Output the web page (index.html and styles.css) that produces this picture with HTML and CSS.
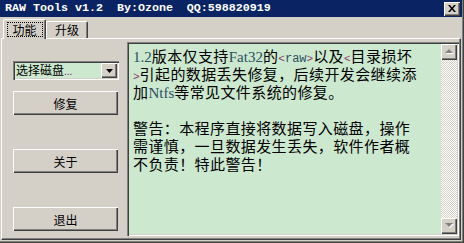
FILE: index.html
```html
<!DOCTYPE html>
<html>
<head>
<meta charset="utf-8">
<link rel="stylesheet" href="styles.css">
</head>
<body>
<div class="window">
  <div class="titlebar">
    <span class="title">RAW Tools v1.2  By:Ozone  QQ:598820919</span>
    <span class="close"><svg width="8" height="7" viewBox="0 0 8 7"><path d="M0 0h2l2 2.5L6 0h2L5 3.5 8 7H6L4 4.5 2 7H0l3-3.5z" fill="#000"/></svg></span>
  </div>
  <div class="tabs">
    <div class="tab active"><span class="focus">功能</span></div>
    <div class="tab">升级</div>
  </div>
  <div class="panel">
    <div class="side">
      <div class="combo">
        <span class="combo-text">选择磁盘<span class="dots">...</span></span>
        <span class="combo-btn"><svg width="7" height="4" viewBox="0 0 7 4"><path d="M0 0h7L3.5 4z" fill="#000"/></svg></span>
      </div>
      <div class="btn btn-first">修复</div>
      <div class="btn btn-gap">关于</div>
      <div class="btn btn-gap">退出</div>
    </div>
    <div class="memo">
      <div class="memo-text">
        <div class="line"><span class="lat">1.2</span>版本仅支持<span class="lat">Fat32</span>的<span class="tag">&lt;</span><span class="tw">raw</span><span class="tag">&gt;</span>以及<span class="tag">&lt;</span>目录损坏</div>
        <div class="line"><span class="tag">&gt;</span>引起的数据丢失修复，后续开发会继续添</div>
        <div class="line">加<span class="lat">Ntfs</span>等常见文件系统的修复。</div>
        <div class="line"></div>
        <div class="line">警告：本程序直接将数据写入磁盘，操作</div>
        <div class="line">需谨慎，一旦数据发生丢失，软件作者概</div>
        <div class="line">不负责！特此警告！</div>
      </div>
      <div class="scrollbar">
        <span class="sbtn"><svg width="9" height="6" viewBox="0 0 9 6"><path d="M1 5h8L5 1z" fill="#fff"/><path d="M0 4h8L4 0z" fill="#808080"/></svg></span>
        <span class="track"></span>
        <span class="sbtn"><svg width="9" height="6" viewBox="0 0 9 6"><path d="M1 1h8L5 5z" fill="#fff"/><path d="M0 0h8L4 4z" fill="#808080"/></svg></span>
      </div>
    </div>
  </div>
</div>
</body>
</html>
```
FILE: styles.css
```css
* { box-sizing: border-box; }
html, body { margin: 0; padding: 0; }
body {
  width: 464px;
  height: 243px;
  overflow: hidden;
  background: #d4d0c8;
  font-family: "Noto Sans CJK SC", "Liberation Sans", sans-serif;
}
.window {
  width: 464px;
  height: 243px;
  display: flex;
  flex-direction: column;
  background: #d4d0c8;
  padding: 0 2px 2px 0;
  box-shadow: inset -1px -1px #404040, inset -2px -2px #808080;
}
.titlebar {
  height: 17px;
  flex: none;
  background: #0a2463;
  display: flex;
  align-items: center;
  justify-content: space-between;
  padding: 0 2px 0 5px;
}
.title {
  color: #fff;
  font-family: "Liberation Mono", monospace;
  font-weight: bold;
  font-size: 11.67px;
  white-space: pre;
  line-height: 17px;
}
.close {
  width: 16px;
  height: 14px;
  background: #d4d0c8;
  display: flex;
  align-items: center;
  justify-content: center;
  box-shadow: inset 1px 1px #fff, inset -1px -1px #404040, inset -2px -2px #808080;
}
.close svg { display: block; }
.tabs {
  margin-top: 2px;
  height: 19px;
  flex: none;
  display: flex;
  align-items: flex-end;
  padding-left: 3px;
  position: relative;
  z-index: 1;
}
.tab {
  height: 17px;
  width: 42px;
  font-size: 12px;
  line-height: 14px;
  color: #000;
  border-top: 1px solid #fff;
  border-left: 1px solid #fff;
  border-right: 1px solid #404040;
  border-top-left-radius: 2px;
  border-top-right-radius: 2px;
  box-shadow: inset -1px 0 #808080;
  display: flex;
  align-items: center;
  justify-content: center;
}
.tab.active {
  height: 20px;
  width: 43px;
  margin-bottom: -1px;
  background: #d4d0c8;
  align-items: flex-start;
  padding-top: 2px;
}
.focus {
  display: flex;
  align-items: center;
  justify-content: center;
  border: 1px dotted #000;
  width: 36px;
  height: 15px;
  line-height: 13px;
}
.panel {
  flex: 1;
  display: flex;
  padding: 3px 1px 3px 11px;
  border-top: 1px solid #fff;
  border-left: 1px solid #fff;
  border-right: 1px solid #404040;
  border-bottom: 1px solid #404040;
  box-shadow: inset -1px -1px #808080;
  margin: 0 1px 1px 1px;
}
.side {
  width: 106px;
  flex: none;
  display: flex;
  flex-direction: column;
  padding-top: 19px;
  margin-right: 8px;
}
.combo {
  height: 19px;
  display: flex;
  align-items: center;
  background: #cce8cf;
  box-shadow: inset 1px 1px #808080, inset 2px 2px #404040, inset -1px -1px #fff, inset -2px -2px #d4d0c8;
  padding: 2px;
}
.combo-text {
  flex: 1;
  font-size: 12px;
  line-height: 15px;
  color: #000;
  padding-left: 1px;
}
.dots { color: #800080; font-family: "Liberation Sans", sans-serif; font-size: 10px; }
.combo-btn {
  width: 16px;
  height: 15px;
  background: #d4d0c8;
  display: flex;
  align-items: center;
  justify-content: center;
  box-shadow: inset 1px 1px #fff, inset -1px -1px #404040, inset -2px -2px #808080;
}
.combo-btn svg { display: block; }
.btn {
  width: 105px;
  height: 24px;
  display: flex;
  align-items: center;
  justify-content: center;
  font-size: 12px;
  color: #000;
  background: #d4d0c8;
  box-shadow: inset 1px 1px #fff, inset -1px -1px #404040, inset -2px -2px #808080;
}
.btn-first { margin-top: 11px; }
.btn-gap { margin-top: 34px; }
.memo {
  flex: 1;
  display: flex;
  background: #cce8cf;
  padding: 2px;
  box-shadow: inset 1px 1px #808080, inset 2px 2px #404040, inset -1px -1px #fff, inset -2px -2px #d4d0c8;
}
.memo-text {
  flex: 1;
  padding: 3px 0 0 4px;
  white-space: nowrap;
  overflow: hidden;
}
.line {
  height: 18px;
  line-height: 18px;
  font-size: 15px;
  letter-spacing: 0.4px;
  color: #000;
}
.lat {
  font-family: "Liberation Serif", serif;
  font-size: 15px;
  letter-spacing: 0;
  color: #2a5060;
}
.tag {
  font-family: "Liberation Mono", monospace;
  font-size: 11px;
  letter-spacing: 0;
  color: #8a3a6a;
}
.tw {
  font-family: "Liberation Mono", monospace;
  font-size: 12px;
  letter-spacing: 0;
  color: #2a5060;
}
.scrollbar {
  width: 16px;
  flex: none;
  display: flex;
  flex-direction: column;
}
.sbtn {
  width: 16px;
  height: 16px;
  flex: none;
  background: #d4d0c8;
  display: flex;
  align-items: center;
  justify-content: center;
  box-shadow: inset 1px 1px #fff, inset -1px -1px #404040, inset -2px -2px #808080;
}
.sbtn svg { display: block; }
.track {
  flex: 1;
  background-image: repeating-conic-gradient(#d4d0c8 0 25%, #fff 0 50%);
  background-size: 2px 2px;
}
```
